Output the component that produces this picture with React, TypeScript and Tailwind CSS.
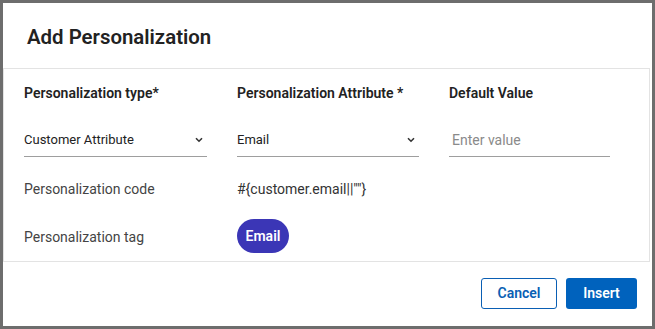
import React from "react";

function Chevron() {
  return (
    <svg width="8" height="6" viewBox="0 0 8 6" className="shrink-0">
      <path d="M1 1.2 L4 4.2 L7 1.2" fill="none" stroke="#333" strokeWidth="1.6" />
    </svg>
  );
}

function SelectField({ value }: { value: string }) {
  return (
    <div className="flex h-[33px] items-center justify-between border-b border-[#9e9e9e] pr-[4px] text-[13px] text-[#222]">
      <span>{value}</span>
      <Chevron />
    </div>
  );
}

export default function App() {
  return (
    <div className="h-[329px] w-[655px] bg-[#6d6d6d] p-[3px] font-['Roboto',sans-serif]">
      <div className="flex h-[323px] w-[649px] flex-col bg-white">
        <div className="flex h-[65px] shrink-0 items-center pl-[24px] pt-[3px]">
          <h2 className="text-[20.4px] font-semibold text-[#222]">Add Personalization</h2>
        </div>
        <div className="mr-[2px] h-[194px] shrink-0 border border-[#e3e3e3] pl-[20px] pt-[14px]">
          <div className="grid grid-cols-[183px_182px_161px] gap-x-[30px] text-[14px]">
            <div className="h-[20px] font-semibold leading-[20px] text-[#222]">Personalization type*</div>
            <div className="h-[20px] font-semibold leading-[20px] text-[#222]">Personalization Attribute *</div>
            <div className="h-[20px] font-semibold leading-[20px] text-[#222]">Default Value</div>

            <div className="mt-[21px]">
              <SelectField value="Customer Attribute" />
            </div>
            <div className="mt-[21px]">
              <SelectField value="Email" />
            </div>
            <div className="mt-[21px] flex h-[33px] items-center border-b border-[#9e9e9e] pl-[3px] text-[14px] text-[#8a8a8a]">
              Enter value
            </div>

            <div className="mt-[22px] h-[20px] leading-[20px] text-[#444]">Personalization code</div>
            <div className="mt-[22px] h-[20px] leading-[20px] text-[#333]">#&#123;customer.email||""&#125;</div>
            <div />

            <div className="mt-[20px] flex h-[34px] items-center pt-[3px] text-[#444]">Personalization tag</div>
            <div className="mt-[20px]">
              <span className="flex h-[34px] w-[52px] items-center justify-center rounded-full bg-[#3b36b6] text-[14px] font-semibold text-white">
                Email
              </span>
            </div>
            <div />
          </div>
        </div>
        <div className="flex flex-1 items-start justify-end gap-[9px] pr-[15px] pt-[16px]">
          <button className="h-[31px] w-[76px] rounded-[3px] border border-[#0a5fb4] text-[14px] font-semibold text-[#0a5fb4]">
            Cancel
          </button>
          <button className="h-[31px] w-[71px] rounded-[3px] bg-[#0062bd] text-[14px] font-semibold text-white">
            Insert
          </button>
        </div>
      </div>
    </div>
  );
}
